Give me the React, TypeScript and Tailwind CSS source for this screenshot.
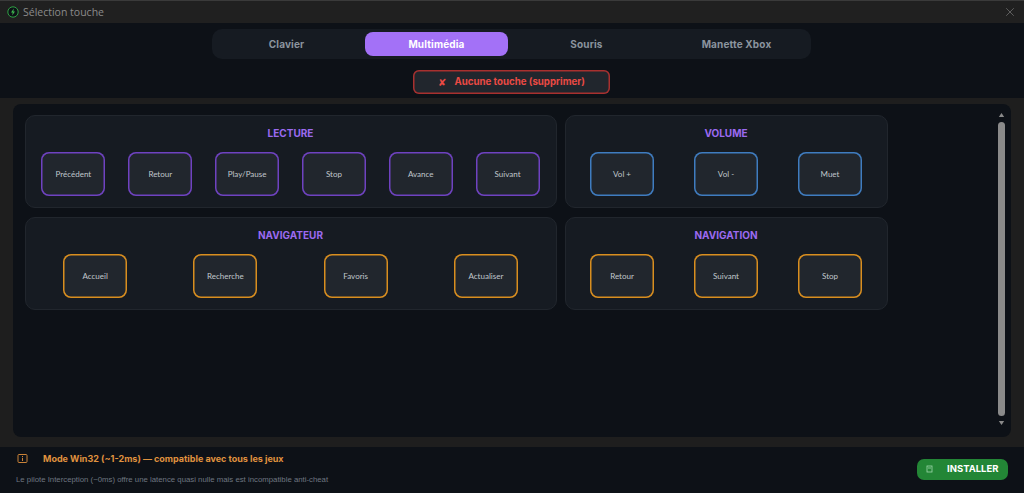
import { X } from "lucide-react";

type Group = {
  title: string;
  border: string;
  keys: string[];
};

const rows: Group[][] = [
  [
    {
      title: "LECTURE",
      border: "shadow-[inset_0_0_0_1.5px_#6f42c1]",
      keys: ["Précédent", "Retour", "Play/Pause", "Stop", "Avance", "Suivant"],
    },
    {
      title: "VOLUME",
      border: "shadow-[inset_0_0_0_1.5px_#3f7cc0]",
      keys: ["Vol +", "Vol -", "Muet"],
    },
  ],
  [
    {
      title: "NAVIGATEUR",
      border: "shadow-[inset_0_0_0_1.5px_#d98e1f]",
      keys: ["Accueil", "Recherche", "Favoris", "Actualiser"],
    },
    {
      title: "NAVIGATION",
      border: "shadow-[inset_0_0_0_1.5px_#d98e1f]",
      keys: ["Retour", "Suivant", "Stop"],
    },
  ],
];

const tabs = ["Clavier", "Multimédia", "Souris", "Manette Xbox"];

function KeyGroup({ group }: { group: Group }) {
  return (
    <section className="h-[93px] rounded-[10px] border border-[#21262d] bg-[#161b22] pt-[10px] pr-[5px] pl-[4px]">
      <h3 className="text-center text-[10px] leading-[14px] font-bold text-[#9b6af0]">
        {group.title}
      </h3>
      <div className="mt-[12px] flex justify-around">
        {group.keys.map((key) => (
          <button
            key={key}
            type="button"
            className={`flex h-[44px] w-[64px] items-center justify-center rounded-[8px] bg-[#21262d] font-['Lato',sans-serif] text-[8px] text-[#c0c6cc] ${group.border}`}
          >
            {key}
          </button>
        ))}
      </div>
    </section>
  );
}

export default function App() {
  return (
    <div className="flex h-[493px] w-[1024px] flex-col overflow-hidden bg-[#0d1117] font-['Inter',sans-serif]">
      <header className="flex h-[23px] shrink-0 items-center justify-between border-t border-[#3a3a3a] bg-[#202020] px-[7px]">
        <div className="flex items-center gap-[4px]">
          <svg width="12" height="12" viewBox="0 0 12 12">
            <circle cx="6" cy="6" r="5.2" fill="#0d1117" stroke="#2ea043" strokeWidth="1" />
            <path d="M6.8 2.4 4 6.5h1.7L5.2 9.6 8 5.5H6.3z" fill="#3fb950" />
          </svg>
          <span className="pt-px font-['Open_Sans',sans-serif] text-[10.5px] text-[#8b8b8b]">
            Sélection touche
          </span>
        </div>
        <X size={14} strokeWidth={1} className="text-[#8b8b8b]" />
      </header>

      <div className="flex h-[75px] shrink-0 flex-col items-center bg-[#0d1117] pt-[6px] pr-px">
        <nav className="flex h-[30px] w-[599px] items-center gap-[7px] rounded-[10px] bg-[#161b22] px-[3px]">
          {tabs.map((tab) => (
            <div
              key={tab}
              className={`flex h-[24px] flex-1 items-center justify-center rounded-[8px] text-[10px] font-bold tracking-[0.15px] ${
                tab === "Multimédia" ? "bg-[#a371f7] text-white" : "text-[#8b949e]"
              }`}
            >
              {tab}
            </div>
          ))}
        </nav>
        <button
          type="button"
          className="mt-[11px] flex h-[24px] w-[197px] items-center justify-center gap-[8px] rounded-[6px] bg-[#21262d] text-[9.7px] font-bold text-[#ea4a44] shadow-[inset_0_0_0_1.5px_#a8302f]"
        >
          <span className="font-['DejaVu_Sans',sans-serif] text-[10px]">✘</span>
          Aucune touche (supprimer)
        </button>
      </div>

      <div className="flex h-[349px] shrink-0 flex-col bg-[#1e1e1e] px-[13px] pt-[6px] pb-[10px]">
        <main className="flex min-h-0 flex-1 rounded-[8px] bg-[#0d1117] pt-[11px] pl-[12px]">
          <div className="flex w-[863px] shrink-0 flex-col gap-[9px]">
            {rows.map((row) => (
              <div key={row[0].title} className="grid grid-cols-[532px_323px] gap-[8px]">
                {row.map((group) => (
                  <KeyGroup key={group.title} group={group} />
                ))}
              </div>
            ))}
          </div>
          <div className="ml-[109px] flex w-[9px] flex-col items-center pb-[11px]">
            <svg width="7" height="6" viewBox="0 0 7 6" className="mt-[-3px] shrink-0">
              <path d="M3.5 1 6.2 5H.8z" fill="#8a8a8a" />
            </svg>
            <div className="my-[4px] w-[7px] flex-1 rounded-full bg-[#8a8a8a]" />
            <svg width="7" height="6" viewBox="0 0 7 6" className="shrink-0">
              <path d="M3.5 5 6.2 1H.8z" fill="#8a8a8a" />
            </svg>
          </div>
        </main>
      </div>

      <footer className="flex min-h-0 flex-1 items-center justify-between bg-[#0d1117] px-[16px] pb-[2px]">
        <div>
          <div className="flex items-center gap-[15px] text-[9px] font-bold text-[#e0933f]">
            <svg width="11" height="11" viewBox="0 0 11 11" className="ml-[1px]">
              <rect x="1" y="1.5" width="9" height="8" rx="1" fill="none" stroke="#c98238" strokeWidth="1" />
              <path d="M5.5 3v1M5.5 4.8v3.2" stroke="#c98238" strokeWidth="1" />
            </svg>
            Mode Win32 (~1-2ms) — compatible avec tous les jeux
          </div>
          <p className="mt-[9px] font-['Liberation_Sans',sans-serif] text-[7.8px] text-[#6e7681]">
            Le pilote Interception (~0ms) offre une latence quasi nulle mais est incompatible anti-cheat
          </p>
        </div>
        <button
          type="button"
          className="flex h-[21px] w-[91px] items-center gap-[14px] rounded-[7px] bg-[#238636] pl-[9px] text-[9.5px] font-bold text-white"
        >
          <svg width="7" height="8" viewBox="0 0 7 8">
            <rect x="1" y="1" width="5" height="6" fill="none" stroke="#9fd8ac" strokeWidth="0.8" />
            <path d="M2 3h3" stroke="#9fd8ac" strokeWidth="0.8" />
          </svg>
          INSTALLER
        </button>
      </footer>
    </div>
  );
}
